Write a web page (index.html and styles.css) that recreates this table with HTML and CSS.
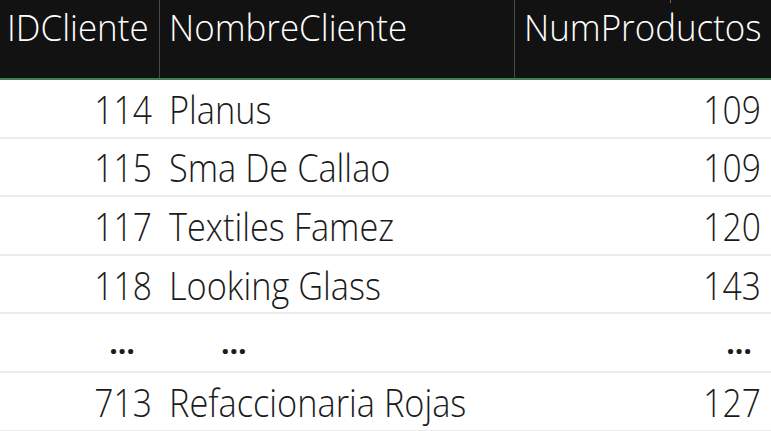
FILE: index.html
```html
<!DOCTYPE html>
<html lang="es">
<head>
<meta charset="utf-8">
<title>Clientes</title>
<link rel="stylesheet" href="styles.css">
</head>
<body>
<div class="table">
  <div class="head">
    <div class="hcell c1"><span class="ht">IDCliente</span></div>
    <div class="hcell c2"><span class="ht">NombreCliente</span></div>
    <div class="hcell c3"><span class="ht">NumProductos</span><span class="tick"></span></div>
  </div>
  <div class="row"><div class="cell num c1"><span class="t">114</span></div><div class="cell c2"><span class="t">Planus</span></div><div class="cell num c3"><span class="t">109</span></div></div>
  <div class="row"><div class="cell num c1"><span class="t">115</span></div><div class="cell c2"><span class="t">Sma De Callao</span></div><div class="cell num c3"><span class="t">109</span></div></div>
  <div class="row"><div class="cell num c1"><span class="t">117</span></div><div class="cell c2"><span class="t">Textiles Famez</span></div><div class="cell num c3"><span class="t">120</span></div></div>
  <div class="row"><div class="cell num c1"><span class="t">118</span></div><div class="cell c2"><span class="t">Looking Glass</span></div><div class="cell num c3"><span class="t">143</span></div></div>
  <div class="row dots"><div class="cell d1">…</div><div class="cell d2">…</div><div class="cell d3">…</div></div>
  <div class="row"><div class="cell num c1"><span class="t">713</span></div><div class="cell c2"><span class="t">Refaccionaria Rojas</span></div><div class="cell num c3"><span class="t">127</span></div></div>
</div>
</body>
</html>
```
FILE: styles.css
```css
html, body {
  margin: 0;
  padding: 0;
  background: #ffffff;
}
body {
  font-family: "Open Sans", "Noto Sans", sans-serif;
  font-weight: 360;
  overflow: hidden;
}
.table {
  width: 771px;
}
.head {
  display: grid;
  grid-template-columns: 160px 355px 1fr;
  height: 78px;
  background: #121212;
  border-bottom: 2px solid #3d8058;
  color: #ffffff;
}
.hcell {
  font-size: 36px;
  line-height: 56px;
  white-space: nowrap;
  position: relative;
}
.ht {
  display: inline-block;
  transform: scaleX(0.97);
  transform-origin: left center;
}
.hcell.c1 {
  padding-left: 7px;
  border-right: 1px solid #4a4a4a;
}
.hcell.c2 {
  padding-left: 9px;
  border-right: 1px solid #4a4a4a;
}
.hcell.c3 {
  padding-left: 9px;
}
.tick {
  position: absolute;
  left: 155px;
  top: 0;
  width: 1px;
  height: 3px;
  background: #6a6a6a;
}
.row {
  display: grid;
  grid-template-columns: 160px 355px 1fr;
  height: 56.6px;
  border-bottom: 2px solid #ebebeb;
  color: #1b1b1b;
  align-items: center;
}
.cell {
  font-size: 39px;
  white-space: nowrap;
}
.t {
  display: inline-block;
  transform: scaleX(0.88);
  transform-origin: left center;
}
.num .t {
  transform: scaleX(0.86);
  transform-origin: right center;
}
.num.c1 {
  text-align: right;
  padding-right: 8px;
}
.c2 {
  padding-left: 9px;
}
.num.c3 {
  text-align: right;
  padding-right: 10px;
}
.dots .cell {
  font-size: 30px;
  font-weight: bold;
}
.d1 {
  text-align: right;
  padding-right: 25px;
}
.d2 {
  padding-left: 61px;
}
.d3 {
  text-align: right;
  padding-right: 19px;
}
```
